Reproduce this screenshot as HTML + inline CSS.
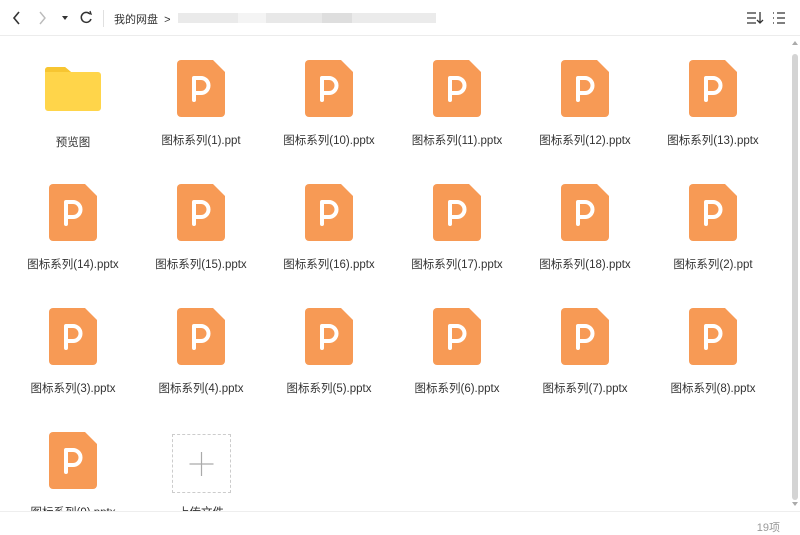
<!DOCTYPE html>
<html><head><meta charset="utf-8"><style>
*{margin:0;padding:0;box-sizing:border-box}
body{width:800px;height:533px;overflow:hidden;background:#fff;font-family:"Liberation Sans","Noto Sans CJK SC",sans-serif;position:relative}
.top{position:absolute;left:0;top:0;width:800px;height:36px;border-bottom:1px solid #ececec}
.cell{position:absolute;width:128px;height:124px}
.cell svg{position:absolute;left:40px;top:0}
.lbl{position:absolute;left:0;width:128px;top:72px;text-align:center;font-size:11.5px;color:#333;white-space:nowrap}
.foot{position:absolute;left:0;top:511px;width:800px;height:22px;border-top:1px solid #eee;background:#fff}
</style></head><body>
<div class="top">
<svg width="800" height="36" style="position:absolute;left:0;top:0">
<path d="M19 12 L14 18 L19 24" stroke="#333" stroke-width="1.6" fill="none"/>
<path d="M40 12 L45 18 L40 24" stroke="#bbb" stroke-width="1.4" fill="none"/>
<path d="M62 16 L68 16 L65 20Z" fill="#333"/>
<path d="M90 14 A5 5 0 1 0 91 19" stroke="#333" stroke-width="1.5" fill="none"/>
<path d="M88 13 L91 14 L90 11" stroke="#333" stroke-width="1.3" fill="none"/>
<line x1="103.5" y1="10" x2="103.5" y2="27" stroke="#e0e0e0"/>
<rect x="178" y="13" width="60" height="10" fill="#eaeaea"/>
<rect x="238" y="13" width="28" height="10" fill="#f4f4f4"/>
<rect x="266" y="13" width="56" height="10" fill="#e8e8e8"/>
<rect x="322" y="13" width="30" height="10" fill="#dedede"/>
<rect x="352" y="13" width="84" height="10" fill="#ebebeb"/>
<path d="M747 13h9M747 18h9M747 23h9" stroke="#333" stroke-width="1.3"/>
<path d="M760 12v11M757 20l3 3 3-3" stroke="#333" stroke-width="1.3" fill="none"/>
<path d="M773 13h1M773 18h1M773 23h1M777 13h8M777 18h8M777 23h8" stroke="#333" stroke-width="1.3"/>
</svg>
<div style="position:absolute;left:114px;top:11px;font-size:11px;color:#333">我的网盘 &nbsp;&gt;</div>
</div>
<svg width="10" height="474" style="position:absolute;left:790px;top:37px">
<path d="M2 8 L5 4 L8 8Z" fill="#aaa"/>
<rect x="2" y="17" width="6" height="446" rx="3" fill="#d4d4d4"/>
<path d="M2 465 L5 469 L8 465Z" fill="#aaa"/>
</svg>
<div class="foot"><div style="position:absolute;right:20px;top:7px;font-size:11px;color:#999">19项</div></div>
<div style="position:absolute;left:0;top:37px;width:790px;height:474px;overflow:hidden">
<div class="cell" style="left:9px;top:23px">
<svg width="70" height="60" style="left:31px"><path d="M5 10 a3 3 0 0 1 3-3 h17 l6 5 h27 a3 3 0 0 1 3 3 v33 a3 3 0 0 1-3 3 h-50 a3 3 0 0 1-3-3z" fill="#ffd54a"/><path d="M5 10 a3 3 0 0 1 3-3 h17 l6 5 h-26z" fill="#f7c531"/></svg>
<div class="lbl" style="top:74px">预览图</div></div>
<div class="cell" style="left:137px;top:23px"><svg width="50" height="60"><path d="M4 0h32l12 12v41a4 4 0 0 1-4 4h-40a4 4 0 0 1-4-4v-49a4 4 0 0 1 4-4z" fill="#f79a55"/><path d="M17 40V18h7a7.5 7.5 0 0 1 0 15h-7" stroke="#fff" stroke-width="4" fill="none" stroke-linecap="round" stroke-linejoin="round"/></svg><div class="lbl">图标系列(1).ppt</div></div>
<div class="cell" style="left:265px;top:23px"><svg width="50" height="60"><path d="M4 0h32l12 12v41a4 4 0 0 1-4 4h-40a4 4 0 0 1-4-4v-49a4 4 0 0 1 4-4z" fill="#f79a55"/><path d="M17 40V18h7a7.5 7.5 0 0 1 0 15h-7" stroke="#fff" stroke-width="4" fill="none" stroke-linecap="round" stroke-linejoin="round"/></svg><div class="lbl">图标系列(10).pptx</div></div>
<div class="cell" style="left:393px;top:23px"><svg width="50" height="60"><path d="M4 0h32l12 12v41a4 4 0 0 1-4 4h-40a4 4 0 0 1-4-4v-49a4 4 0 0 1 4-4z" fill="#f79a55"/><path d="M17 40V18h7a7.5 7.5 0 0 1 0 15h-7" stroke="#fff" stroke-width="4" fill="none" stroke-linecap="round" stroke-linejoin="round"/></svg><div class="lbl">图标系列(11).pptx</div></div>
<div class="cell" style="left:521px;top:23px"><svg width="50" height="60"><path d="M4 0h32l12 12v41a4 4 0 0 1-4 4h-40a4 4 0 0 1-4-4v-49a4 4 0 0 1 4-4z" fill="#f79a55"/><path d="M17 40V18h7a7.5 7.5 0 0 1 0 15h-7" stroke="#fff" stroke-width="4" fill="none" stroke-linecap="round" stroke-linejoin="round"/></svg><div class="lbl">图标系列(12).pptx</div></div>
<div class="cell" style="left:649px;top:23px"><svg width="50" height="60"><path d="M4 0h32l12 12v41a4 4 0 0 1-4 4h-40a4 4 0 0 1-4-4v-49a4 4 0 0 1 4-4z" fill="#f79a55"/><path d="M17 40V18h7a7.5 7.5 0 0 1 0 15h-7" stroke="#fff" stroke-width="4" fill="none" stroke-linecap="round" stroke-linejoin="round"/></svg><div class="lbl">图标系列(13).pptx</div></div>

<div class="cell" style="left:9px;top:147px"><svg width="50" height="60"><path d="M4 0h32l12 12v41a4 4 0 0 1-4 4h-40a4 4 0 0 1-4-4v-49a4 4 0 0 1 4-4z" fill="#f79a55"/><path d="M17 40V18h7a7.5 7.5 0 0 1 0 15h-7" stroke="#fff" stroke-width="4" fill="none" stroke-linecap="round" stroke-linejoin="round"/></svg><div class="lbl">图标系列(14).pptx</div></div>
<div class="cell" style="left:137px;top:147px"><svg width="50" height="60"><path d="M4 0h32l12 12v41a4 4 0 0 1-4 4h-40a4 4 0 0 1-4-4v-49a4 4 0 0 1 4-4z" fill="#f79a55"/><path d="M17 40V18h7a7.5 7.5 0 0 1 0 15h-7" stroke="#fff" stroke-width="4" fill="none" stroke-linecap="round" stroke-linejoin="round"/></svg><div class="lbl">图标系列(15).pptx</div></div>
<div class="cell" style="left:265px;top:147px"><svg width="50" height="60"><path d="M4 0h32l12 12v41a4 4 0 0 1-4 4h-40a4 4 0 0 1-4-4v-49a4 4 0 0 1 4-4z" fill="#f79a55"/><path d="M17 40V18h7a7.5 7.5 0 0 1 0 15h-7" stroke="#fff" stroke-width="4" fill="none" stroke-linecap="round" stroke-linejoin="round"/></svg><div class="lbl">图标系列(16).pptx</div></div>
<div class="cell" style="left:393px;top:147px"><svg width="50" height="60"><path d="M4 0h32l12 12v41a4 4 0 0 1-4 4h-40a4 4 0 0 1-4-4v-49a4 4 0 0 1 4-4z" fill="#f79a55"/><path d="M17 40V18h7a7.5 7.5 0 0 1 0 15h-7" stroke="#fff" stroke-width="4" fill="none" stroke-linecap="round" stroke-linejoin="round"/></svg><div class="lbl">图标系列(17).pptx</div></div>
<div class="cell" style="left:521px;top:147px"><svg width="50" height="60"><path d="M4 0h32l12 12v41a4 4 0 0 1-4 4h-40a4 4 0 0 1-4-4v-49a4 4 0 0 1 4-4z" fill="#f79a55"/><path d="M17 40V18h7a7.5 7.5 0 0 1 0 15h-7" stroke="#fff" stroke-width="4" fill="none" stroke-linecap="round" stroke-linejoin="round"/></svg><div class="lbl">图标系列(18).pptx</div></div>
<div class="cell" style="left:649px;top:147px"><svg width="50" height="60"><path d="M4 0h32l12 12v41a4 4 0 0 1-4 4h-40a4 4 0 0 1-4-4v-49a4 4 0 0 1 4-4z" fill="#f79a55"/><path d="M17 40V18h7a7.5 7.5 0 0 1 0 15h-7" stroke="#fff" stroke-width="4" fill="none" stroke-linecap="round" stroke-linejoin="round"/></svg><div class="lbl">图标系列(2).ppt</div></div>

<div class="cell" style="left:9px;top:271px"><svg width="50" height="60"><path d="M4 0h32l12 12v41a4 4 0 0 1-4 4h-40a4 4 0 0 1-4-4v-49a4 4 0 0 1 4-4z" fill="#f79a55"/><path d="M17 40V18h7a7.5 7.5 0 0 1 0 15h-7" stroke="#fff" stroke-width="4" fill="none" stroke-linecap="round" stroke-linejoin="round"/></svg><div class="lbl">图标系列(3).pptx</div></div>
<div class="cell" style="left:137px;top:271px"><svg width="50" height="60"><path d="M4 0h32l12 12v41a4 4 0 0 1-4 4h-40a4 4 0 0 1-4-4v-49a4 4 0 0 1 4-4z" fill="#f79a55"/><path d="M17 40V18h7a7.5 7.5 0 0 1 0 15h-7" stroke="#fff" stroke-width="4" fill="none" stroke-linecap="round" stroke-linejoin="round"/></svg><div class="lbl">图标系列(4).pptx</div></div>
<div class="cell" style="left:265px;top:271px"><svg width="50" height="60"><path d="M4 0h32l12 12v41a4 4 0 0 1-4 4h-40a4 4 0 0 1-4-4v-49a4 4 0 0 1 4-4z" fill="#f79a55"/><path d="M17 40V18h7a7.5 7.5 0 0 1 0 15h-7" stroke="#fff" stroke-width="4" fill="none" stroke-linecap="round" stroke-linejoin="round"/></svg><div class="lbl">图标系列(5).pptx</div></div>
<div class="cell" style="left:393px;top:271px"><svg width="50" height="60"><path d="M4 0h32l12 12v41a4 4 0 0 1-4 4h-40a4 4 0 0 1-4-4v-49a4 4 0 0 1 4-4z" fill="#f79a55"/><path d="M17 40V18h7a7.5 7.5 0 0 1 0 15h-7" stroke="#fff" stroke-width="4" fill="none" stroke-linecap="round" stroke-linejoin="round"/></svg><div class="lbl">图标系列(6).pptx</div></div>
<div class="cell" style="left:521px;top:271px"><svg width="50" height="60"><path d="M4 0h32l12 12v41a4 4 0 0 1-4 4h-40a4 4 0 0 1-4-4v-49a4 4 0 0 1 4-4z" fill="#f79a55"/><path d="M17 40V18h7a7.5 7.5 0 0 1 0 15h-7" stroke="#fff" stroke-width="4" fill="none" stroke-linecap="round" stroke-linejoin="round"/></svg><div class="lbl">图标系列(7).pptx</div></div>
<div class="cell" style="left:649px;top:271px"><svg width="50" height="60"><path d="M4 0h32l12 12v41a4 4 0 0 1-4 4h-40a4 4 0 0 1-4-4v-49a4 4 0 0 1 4-4z" fill="#f79a55"/><path d="M17 40V18h7a7.5 7.5 0 0 1 0 15h-7" stroke="#fff" stroke-width="4" fill="none" stroke-linecap="round" stroke-linejoin="round"/></svg><div class="lbl">图标系列(8).pptx</div></div>

<div class="cell" style="left:9px;top:395px"><svg width="50" height="60"><path d="M4 0h32l12 12v41a4 4 0 0 1-4 4h-40a4 4 0 0 1-4-4v-49a4 4 0 0 1 4-4z" fill="#f79a55"/><path d="M17 40V18h7a7.5 7.5 0 0 1 0 15h-7" stroke="#fff" stroke-width="4" fill="none" stroke-linecap="round" stroke-linejoin="round"/></svg><div class="lbl">图标系列(9).pptx</div></div>
<div class="cell" style="left:137px;top:395px"><div style="position:absolute;left:35px;top:2px;width:59px;height:59px;border:1px dashed #ccc"></div><svg width="60" height="60" style="left:35px;top:2px"><path d="M29.5 18v24M17.5 30h24" stroke="#aaa" stroke-width="1.2"/></svg><div class="lbl">上传文件</div></div>
</div>
</body></html>
